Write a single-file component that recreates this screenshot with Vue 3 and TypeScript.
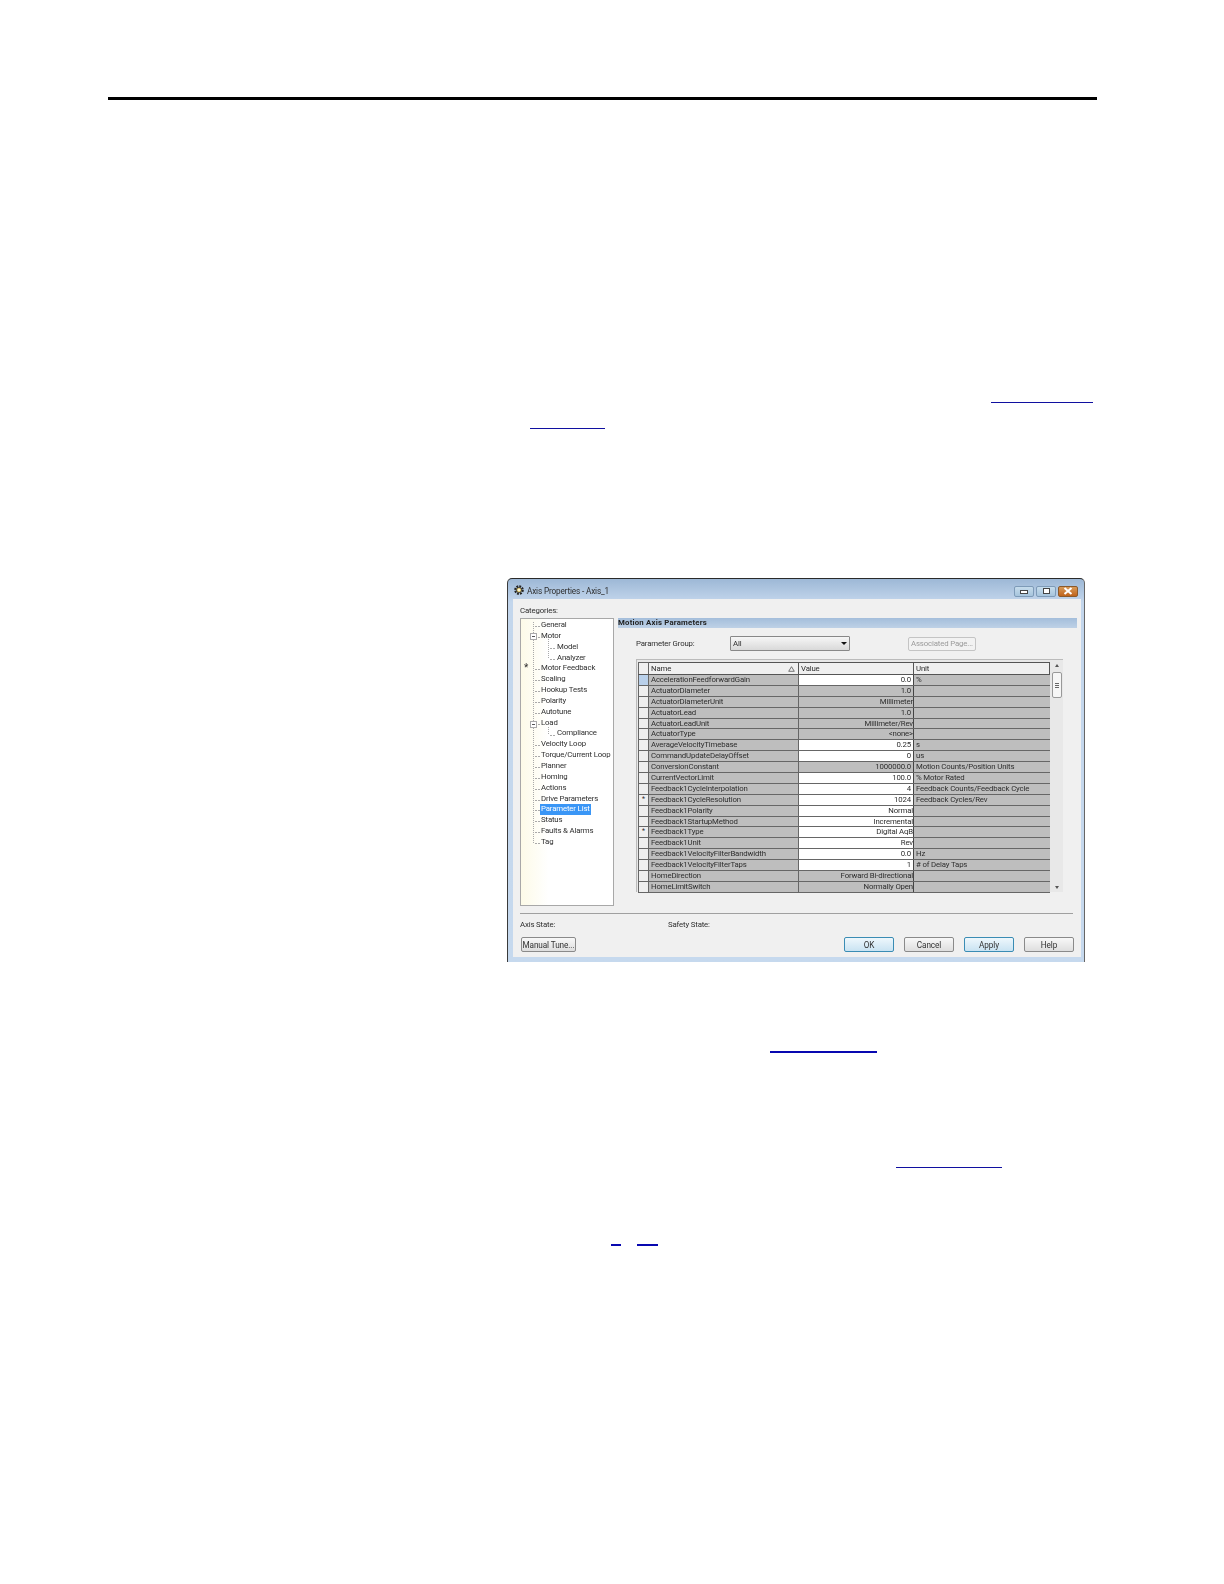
<script setup lang="ts">
interface TreeItem { label: string; depth: number; selected?: boolean }
interface Row { name: string; value: string; unit: string; editable: boolean; mark?: string; active?: boolean }

const tree: TreeItem[] = [
  { label: 'General', depth: 0 }, { label: 'Motor', depth: 0 }, { label: 'Model', depth: 1 },
  { label: 'Analyzer', depth: 1 }, { label: 'Motor Feedback', depth: 0 }, { label: 'Scaling', depth: 0 },
  { label: 'Hookup Tests', depth: 0 }, { label: 'Polarity', depth: 0 }, { label: 'Autotune', depth: 0 },
  { label: 'Load', depth: 0 }, { label: 'Compliance', depth: 1 }, { label: 'Velocity Loop', depth: 0 },
  { label: 'Torque/Current Loop', depth: 0 }, { label: 'Planner', depth: 0 }, { label: 'Homing', depth: 0 },
  { label: 'Actions', depth: 0 }, { label: 'Drive Parameters', depth: 0 },
  { label: 'Parameter List', depth: 0, selected: true }, { label: 'Status', depth: 0 },
  { label: 'Faults & Alarms', depth: 0 }, { label: 'Tag', depth: 0 }
]

const rows: Row[] = [
  { name: 'AccelerationFeedforwardGain', value: '0.0', unit: '%', editable: true, active: true },
  { name: 'ActuatorDiameter', value: '1.0', unit: '', editable: false },
  { name: 'ActuatorDiameterUnit', value: 'Millimeter', unit: '', editable: false },
  { name: 'ActuatorLead', value: '1.0', unit: '', editable: false },
  { name: 'ActuatorLeadUnit', value: 'Millimeter/Rev', unit: '', editable: false },
  { name: 'ActuatorType', value: '<none>', unit: '', editable: false },
  { name: 'AverageVelocityTimebase', value: '0.25', unit: 's', editable: true },
  { name: 'CommandUpdateDelayOffset', value: '0', unit: 'us', editable: true },
  { name: 'ConversionConstant', value: '1000000.0', unit: 'Motion Counts/Position Units', editable: false },
  { name: 'CurrentVectorLimit', value: '100.0', unit: '% Motor Rated', editable: true },
  { name: 'Feedback1CycleInterpolation', value: '4', unit: 'Feedback Counts/Feedback Cycle', editable: true },
  { name: 'Feedback1CycleResolution', value: '1024', unit: 'Feedback Cycles/Rev', editable: true, mark: '*' },
  { name: 'Feedback1Polarity', value: 'Normal', unit: '', editable: true },
  { name: 'Feedback1StartupMethod', value: 'Incremental', unit: '', editable: true },
  { name: 'Feedback1Type', value: 'Digital AqB', unit: '', editable: true, mark: '*' },
  { name: 'Feedback1Unit', value: 'Rev', unit: '', editable: true },
  { name: 'Feedback1VelocityFilterBandwidth', value: '0.0', unit: 'Hz', editable: true },
  { name: 'Feedback1VelocityFilterTaps', value: '1', unit: '# of Delay Taps', editable: true },
  { name: 'HomeDirection', value: 'Forward Bi-directional', unit: '', editable: false },
  { name: 'HomeLimitSwitch', value: 'Normally Open', unit: '', editable: false }
]

const rowH = 10.85
const y = (i: number) => Math.round(7 + i * rowH) + 0.5
const isNum = (v: string) => /^[\d.]+$/.test(v)
</script>

<template>
  <div class="page">
    <div class="rule"></div>
    <a class="link l1"></a>
    <a class="link l2"></a>

    <section class="win">
      <header class="titlebar">
        <svg class="gear" viewBox="0 0 12 12" width="12" height="12">
          <circle cx="6" cy="6" r="3.6" fill="none" stroke="#222" stroke-width="2.4" stroke-dasharray="1.8 1" />
          <circle cx="6" cy="6" r="2.6" fill="#e8d27a" stroke="#333" stroke-width=".8" />
          <circle cx="6" cy="6" r="1" fill="#fff" />
        </svg>
        <span class="title">Axis Properties - Axis_1</span>
        <span class="ctl">
          <span class="wbtn"><i class="min"></i></span>
          <span class="wbtn"><i class="max"></i></span>
          <span class="wbtn close">
            <svg viewBox="0 0 10 8" width="10" height="8"><path d="M1.5 1l7 6M8.500 1l-7 6" stroke="#fff" stroke-width="2" /></svg>
          </span>
        </span>
      </header>

      <div class="body">
        <div class="cats">Categories:</div>
        <div class="main">
          <div class="tree">
            <svg class="lines" width="92" height="240" viewBox="0 0 92 240">
              <g stroke="#aaa" stroke-width="1" fill="none">
                <path stroke-dasharray="1 1" d="M12.500 3V224" />
                <path stroke-dasharray="1 1" d="M27.500 18V40M27.500 108V116" />
                <template v-for="(t, i) in tree" :key="t.label">
                  <path v-if="t.depth === 0" stroke-dasharray="2 1" :d="`M14 ${y(i)}H19`" />
                  <path v-else stroke-dasharray="2 1" :d="`M29 ${y(i)}H35`" />
                </template>
              </g>
              <g fill="#fff" stroke="#aaa">
                <rect x="9.500" y="14.500" width="6" height="6" />
                <rect x="9.500" y="102.500" width="6" height="6" />
              </g>
              <path d="M11 17.500h3M11 105.500h3" stroke="#555" />
            </svg>
            <div
              v-for="t in tree"
              :key="t.label"
              class="node"
              :class="{ sub: t.depth === 1 }"
            >
              <span :class="{ sel: t.selected }">{{ t.label }}</span>
            </div>
            <span class="star">*</span>
          </div>

          <div class="panel">
            <div class="bar">Motion Axis Parameters</div>
            <div class="group">
              <span class="glabel">Parameter Group:</span>
              <div class="select"><span>All</span><i class="arrow"></i></div>
              <div class="assoc">Associated Page...</div>
            </div>
            <div class="grid">
              <div class="table">
                <div class="thead">
                  <div class="hsel"></div>
                  <div class="hcell namecol">Name
                    <svg width="7" height="6" viewBox="0 0 7 6"><path d="M3.500.7L6.300 5.300H.7z" fill="none" stroke="#555" stroke-width=".8" /></svg>
                  </div>
                  <div class="hcell valcol">Value</div>
                  <div class="hcell unitcol">Unit</div>
                </div>
                <div v-for="r in rows" :key="r.name" class="row">
                  <div class="selcell" :class="{ active: r.active }">{{ r.mark }}</div>
                  <div class="cell namecol">{{ r.name }}</div>
                  <div class="cell valcol" :class="{ edit: r.editable, num: isNum(r.value) }">{{ r.value }}</div>
                  <div class="cell unitcol">{{ r.unit }}</div>
                </div>
              </div>
              <div class="scroll">
                <i class="up"></i>
                <div class="thumb"><b></b></div>
                <i class="down"></i>
              </div>
            </div>
          </div>
        </div>

        <div class="sep"></div>
        <div class="states"><span class="s1">Axis State:</span><span>Safety State:</span></div>
        <div class="buttons">
          <button class="btn manual">Manual Tune...</button>
          <div class="actions">
            <button class="btn def">OK</button>
            <button class="btn">Cancel</button>
            <button class="btn def">Apply</button>
            <button class="btn">Help</button>
          </div>
        </div>
      </div>
    </section>

    <a class="link l3"></a>
    <a class="link l4"></a>
    <div class="pair"><a class="link a"></a><a class="link b"></a></div>
  </div>
</template>

<style scoped>
.page {
  width: 1224px;
  height: 1584px;
  background: #fff;
  padding-top: 97px;
  box-sizing: border-box;
  overflow: hidden;
  font-family: Roboto, "Liberation Sans", Arial, sans-serif;
}
.rule { margin-left: 108px; width: 989px; height: 3px; background: #000; }
.link { display: block; height: 1px; background: #1010a0; }
.l1 { margin: 302px 0 0 991px; width: 102px; }
.l2 { margin: 25px 0 0 530px; width: 75px; }
.l3 { margin: 89px 0 0 770px; width: 107px; height: 2px; background: #0808b0; }
.l4 { margin: 114px 0 0 896px; width: 106px; }
.pair { display: flex; margin: 76px 0 0 611px; }
.pair .a { width: 10px; height: 1.5px; background: #0808b0; }
.pair .b { width: 21px; height: 1.5px; margin-left: 16px; background: #0808b0; }

.win {
  margin: 149px 0 0 507px;
  width: 578px;
  height: 384px;
  box-sizing: border-box;
  border-top: 1px solid #2a2a2a;
  border-left: 1px solid #3a3a3a;
  border-right: 1px solid #666;
  border-radius: 5px 5px 0 0;
  padding: 0 3px 5px 5px;
  background: linear-gradient(#9db8d6, #c3d6ec 6%, #c6d9ee);
  font-size: 7.800px;
  letter-spacing: -.15px;
  color: #2e2e2e;
  filter: blur(.3px);
}
.titlebar { height: 20px; display: flex; align-items: center; margin-left: -4px; }
.gear { margin: 1px 2px 0 4px; }
.title { font-size: 8.200px; padding-top: 4px; }
.ctl { margin-left: auto; margin-right: 3px; display: flex; gap: 2px; padding-top: 4px; }
.wbtn {
  width: 20px; height: 11px;
  box-sizing: border-box;
  border: 1px solid #7e9bb8;
  border-radius: 2px;
  background: linear-gradient(#c6dcec, #a6c4dc);
  display: flex; align-items: center; justify-content: center;
}
.wbtn .min { width: 6px; height: 2px; border: 1px solid #444; background: #fff; margin-top: 2px; }
.wbtn .max { width: 5px; height: 4px; border: 1px solid #444; background: #fff; }
.close { background: linear-gradient(#d89a58, #c0641c); border-color: #8a5a2c; }

.body { height: 358px; background: #f0f0f0; box-sizing: border-box; padding-left: 7px; }
.cats { height: 19px; box-sizing: border-box; padding-top: 7px; line-height: 10px; }
.main { display: flex; gap: 4px; height: 288px; }
.tree {
  position: relative;
  width: 94px;
  box-sizing: border-box;
  border: 1px solid #a8a8a8;
  background: linear-gradient(90deg, #fdfbe8, #fff 30%);
  padding-top: 1px;
}
.lines { position: absolute; left: 0; top: 0; }
.node { position: relative; height: 10.85px; line-height: 10.85px; padding-left: 20px; white-space: nowrap; }
.node.sub { padding-left: 36px; }
.sel { background: #3a96f6; color: #fff; display: inline-block; padding: 0 1px; margin-left: -1px; }
.star { position: absolute; left: 3px; top: 45px; font-size: 10px; line-height: 8px; }

.panel { width: 459px; }
.bar {
  height: 10px; line-height: 10px;
  background: linear-gradient(#a4bedb, #bed1e6);
  font-weight: 700;
  letter-spacing: .2px;
  color: #222;
}
.group { display: flex; align-items: center; margin: 8px 0 0 18px; height: 15px; white-space: nowrap; }
.glabel { width: 94px; }
.select {
  width: 120px; height: 15px;
  box-sizing: border-box;
  border: 1px solid #888;
  border-radius: 1px;
  background: linear-gradient(#f6f6f6, #d9d9d9);
  display: flex; align-items: center; justify-content: space-between;
  padding: 0 2px 0 2px;
}
.arrow { border: 3px solid transparent; border-top: 3px solid #111; border-bottom: 0; width: 0; }
.assoc {
  margin-left: 58px;
  width: 68px; height: 14px;
  box-sizing: border-box;
  border: 1px solid #c4c4c4;
  border-radius: 2px;
  background: #f2f2f2;
  color: #9a9a9a;
  text-align: center;
  line-height: 12px;
}
.grid {
  display: flex;
  margin: 8px 0 0 18px;
  width: 427px;
  height: 233px;
  box-sizing: border-box;
  background: #e8e8e8;
  padding: 2px 0 0 1px;
  border-top: 1px solid #bbb;
  border-left: 1px solid #bbb;
}
.table { width: 412px; }
.thead { display: flex; height: 13px; background: #f0f0f0; border-bottom: 1px solid #555; box-sizing: border-box; }
.hsel { width: 11px; box-sizing: border-box; border: 1px solid #666; border-bottom: 0; }
.hcell {
  box-sizing: border-box;
  border-top: 1px solid #555;
  border-right: 1px solid #555;
  padding: 0 3px 0 2px;
  line-height: 10px;
  display: flex; align-items: center; justify-content: space-between;
}
.namecol { width: 150px; }
.valcol { width: 115px; }
.unitcol { width: 136px; }
.row { display: flex; height: 10.900px; box-sizing: border-box; border-bottom: 1px solid #666; background: #bebebe; }
.selcell {
  width: 11px;
  box-sizing: border-box;
  background: #efefef;
  border-left: 1px solid #666;
  border-right: 1px solid #666;
  text-align: center;
  line-height: 9px;
  font-size: 7px;
}
.selcell.active { background: #b9d0ea; }
.cell {
  box-sizing: border-box;
  line-height: 10px;
  padding-left: 2px;
  white-space: nowrap;
  overflow: hidden;
}
.namecol.cell { border-right: 1px solid #666; }
.valcol.cell { text-align: right; padding-right: 0; border-right: 1px solid #444; }
.valcol.num { padding-right: 2px !important; }
.valcol.edit { background: #fff; }
.scroll {
  width: 13px;
  display: flex; flex-direction: column; align-items: center;
  padding-top: 2px;
}
.up { border: 2px solid transparent; border-bottom: 3px solid #555; border-top: 0; width: 0; margin-bottom: 5px; }
.thumb {
  width: 10px; height: 26px;
  box-sizing: border-box;
  border: 1px solid #999;
  border-radius: 2px;
  background: #f6f6f6;
  display: flex; align-items: center; justify-content: center;
}
.thumb b { width: 4px; height: 5px; box-sizing: border-box; border-top: 1px solid #666; border-bottom: 1px solid #666; background: linear-gradient(#666, #666) center / 100% 1px no-repeat; }
.down { border: 2px solid transparent; border-top: 3px solid #555; border-bottom: 0; width: 0; margin-top: auto; margin-bottom: 3px; }

.sep { margin-top: 7px; width: 553px; height: 1px; background: #a0a0a0; }
.states { display: flex; margin-top: 6px; line-height: 10px; height: 10px; }
.s1 { width: 148px; }
.buttons { display: flex; margin: 7px 0 0 1px; }
.actions { display: flex; gap: 10px; margin-left: 268px; }
.btn {
  width: 50px; height: 15px;
  padding: 0;
  box-sizing: border-box;
  border: 1px solid #8a8a8a;
  border-radius: 2px;
  background: linear-gradient(#f8f8f8, #dedede);
  font: inherit;
  font-size: 8.200px;
  letter-spacing: -.1px;
  color: #333;
  white-space: nowrap;
}
.btn.manual { width: 55px; }
.btn.def { border-color: #3a8cb4; background: linear-gradient(#eef7fc, #c9e3f2); }
</style>
